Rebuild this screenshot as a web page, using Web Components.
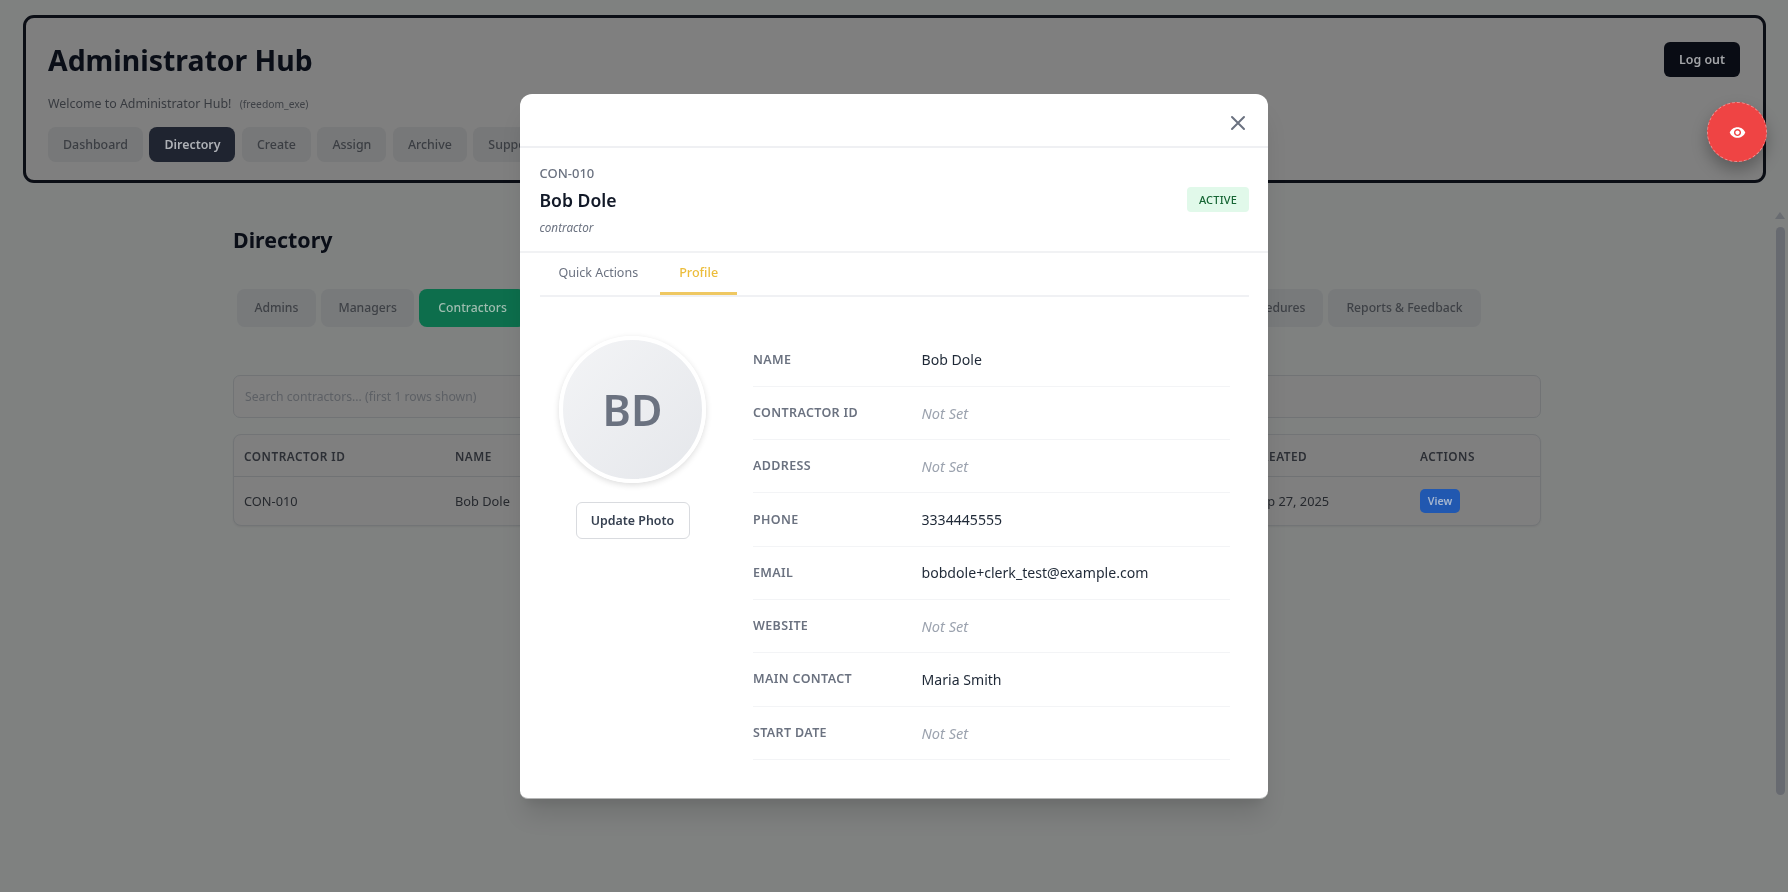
<!DOCTYPE html>
<html>
<head>
<meta charset="utf-8">
<title>Administrator Hub</title>
<style>
    html, body{ height: 100%; margin: 0; overflow: hidden; }
    body{
        background: #7f8180;
        font-family: "Noto Sans", "Liberation Sans", sans-serif;
    }
</style>
</head>
<body>
<hub-page>
    <hub-header slot="top" title="Administrator Hub" user="freedom_exe"></hub-header>
    <directory-view></directory-view>
</hub-page>
<profile-modal></profile-modal>
<preview-fab></preview-fab>

<script>
// colours below are the dimmed ones, what the page looks like under the modal backdrop
class HubPage extends HTMLElement {
    constructor(){
        super();
        this.attachShadow({mode: 'open'});
    }
    connectedCallback(){
        this.shadowRoot.innerHTML = `
        <style>
            :host{ display: flex; flex-direction: column; height: 892px; position: relative; filter: blur(.35px); }
            #top{ display: block; padding: 15px 22px 0 23px; }
            #thumb-arrow{
                position: absolute; right: 3px; top: 212px; width: 0; height: 0;
                border-left: 5px solid transparent; border-right: 5px solid transparent;
                border-bottom: 7px solid #696c71;
            }
            #thumb{
                position: absolute; right: 3px; top: 227px; width: 9px; height: 568px;
                border-radius: 5px; background: #676a70;
            }
        </style>
        <div id="top"><slot name="top"></slot></div>
        <slot></slot>
        <div id="thumb-arrow"></div>
        <div id="thumb"></div>`;
    }
}
customElements.define('hub-page', HubPage);

class HubHeader extends HTMLElement {
    constructor(){
        super();
        this.attachShadow({mode: 'open'});
    }
    connectedCallback(){
        const items = ['Dashboard', 'Directory', 'Create', 'Assign', 'Archive', 'Support'];
        this.shadowRoot.innerHTML = `
        <style>
            :host{
                display: flex; justify-content: space-between; align-items: flex-start;
                box-sizing: border-box; height: 168px; padding: 22px 23px 0 22px;
                border: 3px solid #0b0e15; border-radius: 11px; background: #7f7f7f;
            }
            h1{ margin: 0; font-size: 28.4px; line-height: 41px; font-weight: 700; color: #0a0e17; }
            p{ margin: 14px 0 14px; font-size: 12.4px; line-height: 18px; color: #383b40; }
            small{ margin-left: 5px; font-size: 10.3px; color: #3f4247; }
            nav{ display: flex; gap: 6.5px; }
            a{
                padding: 0 15px; height: 35px; line-height: 35px; border-radius: 8px;
                font-size: 12.4px; font-weight: 500; color: #3b3e43; background: #777879;
            }
            a.on{ background: #1f2430; color: #aeb1b6; font-weight: 600; }
            button{
                margin-top: 2px; width: 76px; height: 35px; border: 0; border-radius: 6px;
                background: #090c14; color: #a3a5a8; font: 600 12.4px "Noto Sans", sans-serif;
            }
        </style>
        <div>
            <h1>${this.getAttribute('title')}</h1>
            <p>Welcome to Administrator Hub! <small>(${this.getAttribute('user')})</small></p>
            <nav>${items.map(i => `<a class="${i === 'Directory' ? 'on' : ''}">${i}</a>`).join('')}</nav>
        </div>
        <button>Log out</button>`;
    }
}
customElements.define('hub-header', HubHeader);

class DirectoryView extends HTMLElement {
    constructor(){
        super();
        this.attachShadow({mode: 'open'});
    }
    connectedCallback(){
        this.shadowRoot.innerHTML = `
        <style>
            :host{ display: block; padding: 40px 247px 0 233px; color: #26292e; }
            h2{ margin: 0 0 33px; font-size: 21.4px; line-height: 33px; font-weight: 700; color: #0a0e17; }
            #tabs{ display: flex; gap: 5px; padding: 0 0 0 4px; margin-bottom: 48px; margin-right: 60px; }
            #tabs span{
                height: 38px; line-height: 38px; padding: 0 17.5px; border-radius: 8px;
                font-size: 12.2px; font-weight: 500; color: #3e4146; background: #787a7b;
            }
            #tabs span:last-child{ padding: 0 18.5px; }
            #tabs span.on{ background: #0d6e4c; color: #9fbdb0; padding: 0 19px; }
            #tabs i{ flex: 1; }
            #search{
                box-sizing: border-box; width: 100%; height: 43px; line-height: 41px; padding: 0 11px;
                border: 1px solid #717375; border-radius: 7px; margin-bottom: 16px;
                font-size: 12.2px; color: #5d6065; background: #7f7f7f;
            }
            #table{
                border: 1px solid #727476; border-radius: 8px; background: #7f7f7f;
                box-shadow: 0 1px 2px rgba(0,0,0,.06);
            }
            .row{ display: grid; grid-template-columns: 211px 798px 167px 1fr; padding-left: 10px; align-items: center; }
            .head{
                height: 41px; border-bottom: 1px solid #707274;
                font-size: 11.8px; font-weight: 600; letter-spacing: .5px; color: #2c2f35;
            }
            .body{ height: 48px; font-size: 12.8px; color: #26292e; }
            b{
                display: block; width: 40px; height: 24px; line-height: 24px; border-radius: 5px; text-align: center;
                font-size: 10.6px; font-weight: 600; background: #2158b0; color: #a6b7d0;
            }
        </style>
        <h2>Directory</h2>
        <div id="tabs">
            <span>Admins</span><span>Managers</span><span class="on">Contractors</span>
            <i></i>
            <span>Procedures</span><span>Reports &amp; Feedback</span>
        </div>
        <div id="search">Search contractors... (first 1 rows shown)</div>
        <div id="table">
            <div class="row head"><div>CONTRACTOR ID</div><div>NAME</div><div>CREATED</div><div>ACTIONS</div></div>
            <div class="row body"><div>CON-010</div><div>Bob Dole</div><div>Sep 27, 2025</div><div><b>View</b></div></div>
        </div>`;
    }
}
customElements.define('directory-view', DirectoryView);

class ProfileRow extends HTMLElement {
    constructor(){
        super();
        this.attachShadow({mode: 'open'});
    }
    connectedCallback(){
        const value = this.getAttribute('value');
        this.shadowRoot.innerHTML = `
        <style>
            :host{
                display: grid; grid-template-columns: 168.5px 1fr; align-items: center;
                box-sizing: border-box; height: 53.3px; border-bottom: 1px solid #f3f4f6;
            }
            #label{ font-size: 12.5px; font-weight: 600; letter-spacing: .35px; color: #6b7280; margin-top: -1px; text-transform: uppercase; }
            #value{ font-size: 14.1px; color: #1f2937; }
            #value.empty{ font-size: 14.6px; font-style: italic; color: #9ca3af; }
        </style>
        <div id="label">${this.getAttribute('label')}</div>
        <div id="value" class="${value ? '' : 'empty'}">${value || 'Not Set'}</div>`;
    }
}
customElements.define('profile-row', ProfileRow);

class ProfileModal extends HTMLElement {
    constructor(){
        super();
        this.attachShadow({mode: 'open'});
    }
    connectedCallback(){
        this.shadowRoot.innerHTML = `
        <style>
            :host{
                display: flex; align-items: center; justify-content: center;
                position: fixed; inset: 0; color: #111827;
            }
            #modal{
                box-sizing: border-box; width: 748px; height: 705px; background: #fff;
                border-radius: 12px 12px 8px 8px; border-bottom: 1px solid #b5b6b6;
                box-shadow: 0 20px 25px -5px rgba(0,0,0,.12), 0 10px 10px -5px rgba(0,0,0,.06);
            }
            #bar{
                display: flex; justify-content: flex-end; align-items: center; box-sizing: border-box;
                height: 54px; padding: 6px 22px 0 0; border-bottom: 2px solid #eff0f3;
            }
            #ident{
                display: flex; justify-content: space-between; align-items: center; box-sizing: border-box;
                height: 105px; padding: 0 19px 0 19.5px; border-bottom: 2px solid #f1f2f4;
            }
            #id{ font-size: 13px; line-height: 18px; font-weight: 500; color: #6b7280; }
            h3{ margin: 6px 0 6px; font-size: 17.6px; line-height: 25px; font-weight: 600; color: #111827; }
            em{ display: block; font-size: 11.7px; line-height: 16px; color: #6b7280; }
            #badge{
                width: 62px; height: 25px; line-height: 25px; border-radius: 4px; text-align: center;
                background: #e1f9ea; color: #166534; font-size: 11px; font-weight: 500; letter-spacing: .2px;
            }
            #tabs{
                display: flex; gap: 3px; margin: 0 19.5px; height: 44px; box-sizing: border-box;
                border-bottom: 2px solid #f0f1f4;
            }
            #tabs span{ padding: 0 19px; height: 42px; box-sizing: border-box; line-height: 39px; font-size: 12.5px; color: #6b7280; }
            #tabs span.on{ color: #ecbd3c; font-weight: 500; font-size: 12.6px; border-bottom: 3px solid #efc862; }
            #body{ display: flex; gap: 47px; padding: 37px 38px 0 39px; }
            #side{ display: flex; flex-direction: column; align-items: center; width: 147px; gap: 19px; padding-top: 2px; }
            #avatar{
                box-sizing: border-box; width: 147px; height: 147px; border-radius: 50%;
                display: flex; align-items: center; justify-content: center;
                border: 4px solid #fff; background: linear-gradient(135deg, #f3f4f6, #e5e7eb);
                box-shadow: 0 2px 6px rgba(0,0,0,.14);
                font-size: 43px; font-weight: 600; color: #6b7280;
            }
            button{
                width: 114px; height: 37px; border: 1px solid #d9dbdf; border-radius: 6px; background: #fff;
                font: 600 12.4px "Noto Sans", sans-serif; color: #374151;
            }
            #rows{ flex: 1; }
        </style>
        <div id="modal">
            <div id="bar">
                <svg width="16" height="16" viewBox="0 0 16 16" fill="none" stroke="#6b7280" stroke-width="2" stroke-linecap="round"><path d="M2 2l12 12M14 2L2 14"/></svg>
            </div>
            <div id="ident">
                <div>
                    <div id="id">CON-010</div>
                    <h3>Bob Dole</h3>
                    <em>contractor</em>
                </div>
                <div id="badge">ACTIVE</div>
            </div>
            <div id="tabs"><span>Quick Actions</span><span class="on">Profile</span></div>
            <div id="body">
                <div id="side">
                    <div id="avatar">BD</div>
                    <button>Update Photo</button>
                </div>
                <div id="rows">
                    <profile-row label="Name" value="Bob Dole"></profile-row>
                    <profile-row label="Contractor ID"></profile-row>
                    <profile-row label="Address"></profile-row>
                    <profile-row label="Phone" value="3334445555"></profile-row>
                    <profile-row label="Email" value="bobdole+clerk_test@example.com"></profile-row>
                    <profile-row label="Website"></profile-row>
                    <profile-row label="Main Contact" value="Maria Smith"></profile-row>
                    <profile-row label="Start Date"></profile-row>
                </div>
            </div>
        </div>`;
    }
}
customElements.define('profile-modal', ProfileModal);

class PreviewFab extends HTMLElement {
    constructor(){
        super();
        this.attachShadow({mode: 'open'});
    }
    connectedCallback(){
        this.shadowRoot.innerHTML = `
        <style>
            :host{
                position: fixed; left: 1707px; top: 102px; box-sizing: border-box; width: 60px; height: 60px;
                display: flex; align-items: center; justify-content: center; border-radius: 50%;
                background: #ef4444; border: 1px dashed #f58f8f;
                box-shadow: 0 8px 16px rgba(0,0,0,.28);
            }
        </style>
        <svg width="17" height="17" viewBox="0 0 24 24" fill="#fff"><path d="M12 4.5C7 4.5 2.73 7.61 1 12c1.73 4.39 6 7.5 11 7.5s9.27-3.11 11-7.5c-1.73-4.39-6-7.5-11-7.5zM12 17c-2.76 0-5-2.24-5-5s2.24-5 5-5 5 2.24 5 5-2.24 5-5 5zm0-8c-1.66 0-3 1.34-3 3s1.34 3 3 3 3-1.34 3-3-1.34-3-3-3z"/></svg>`;
    }
}
customElements.define('preview-fab', PreviewFab);
</script>
</body>
</html>
